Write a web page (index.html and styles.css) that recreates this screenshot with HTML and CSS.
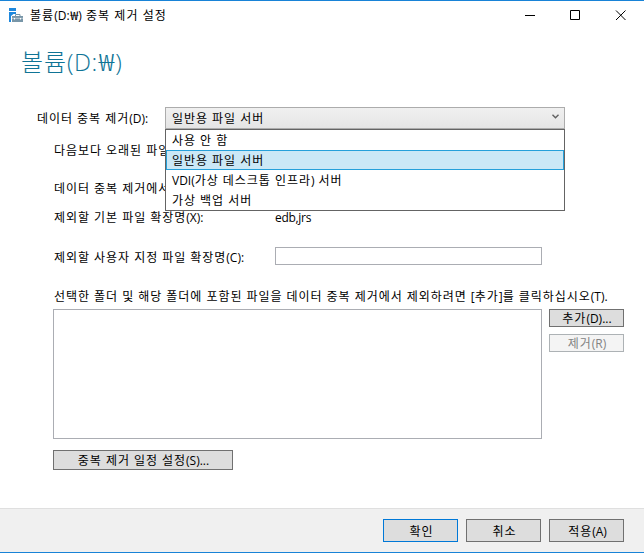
FILE: index.html
```html
<!DOCTYPE html>
<html lang="ko">
<head>
<meta charset="utf-8">
<title>볼륨(D:₩) 중복 제거 설정</title>
<link rel="stylesheet" href="styles.css">
</head>
<body>
<div class="window">
  <header class="titlebar">
    <svg class="app-icon" width="16" height="16" viewBox="0 0 16 16">
      <path fill="#1e88dd" d="M0 1h7v3H0zM0 5h7v2H4.500L2 9v6H0z"/>
      <path fill="#7896a8" d="M3 9h11v6H3z"/>
      <path fill="none" stroke="#7896a8" d="M6.500 9.500v-2h4.500v2"/>
      <path stroke="#d5dfe5" stroke-width=".7" d="M3 11.300h11"/>
      <path fill="#fff" d="M5 11h1v1.500H5zM11 11h1v1.500h-1z"/>
    </svg>
    <span class="caption">볼륨<span class="lat">(D:<span class="won">₩</span>)</span> 중복 제거 설정</span>
    <svg class="controls" width="102" height="12" viewBox="0 0 102 12" fill="none" stroke="#000">
      <path d="M0 5.500h10M45.500.500h9v9h-9z"/>
      <path d="M91 .5l9.500 9.500M100.500.5L91 10"/>
    </svg>
  </header>

  <h1>볼륨<span class="lat">(D:<span class="won">₩</span>)</span></h1>

  <main class="form">
    <div class="row mode">
      <label>데이터 중복 제거<span class="lat">(D):</span></label>
      <div class="combo">
        <span class="value">일반용 파일 서버</span>
        <svg width="7" height="5" viewBox="0 0 7 5" fill="none" stroke="#606060" stroke-width="1.400"><path d="M.5.700l3 3 3-3"/></svg>
        <ul class="menu">
          <li>사용 안 함</li>
          <li class="selected">일반용 파일 서버</li>
          <li><span class="lat">VDI(</span>가상 데스크톱 인프라<span class="lat">)</span> 서버</li>
          <li>가상 백업 서버</li>
        </ul>
      </div>
    </div>
    <div class="row age">다음보다 오래된 파일</div>
    <div class="row exclude">데이터 중복 제거에서</div>
    <div class="row defaults"><span class="name">제외할 기본 파일 확장명<span class="lat">(X):</span></span><span class="lat ext">edb,jrs</span></div>
    <div class="row custom"><span class="name">제외할 사용자 지정 파일 확장명<span class="lat">(C):</span></span><input class="field" type="text"></div>
    <p class="hint">선택한 폴더 및 해당 폴더에 포함된 파일을 데이터 중복 제거에서 제외하려면 <span class="lat">[</span>추가<span class="lat">]</span>를 클릭하십시오<span class="lat">(T).</span></p>
    <div class="folders">
      <div class="list"></div>
      <div class="side">
        <button>추가<span class="lat">(D)...</span></button>
        <button class="off">제거<span class="lat">(R)</span></button>
      </div>
    </div>
    <button class="schedule">중복 제거 일정 설정<span class="lat">(S)...</span></button>
  </main>

  <footer class="footer">
    <button class="primary">확인</button>
    <button>취소</button>
    <button>적용<span class="lat">(A)</span></button>
  </footer>
</div>
</body>
</html>
```
FILE: styles.css
```css
* { box-sizing: border-box; }
body {
  margin: 0;
  font: 12px/16px "Open Sans", "Noto Sans CJK KR", sans-serif;
  letter-spacing: .96px;
  color: #000;
  white-space: nowrap;
}
.lat { letter-spacing: 0; }
.won { display: inline-block; padding: 0 1px; transform: scaleX(1.2); }
.window {
  width: 644px;
  height: 553px;
  display: flex;
  flex-direction: column;
  background: #fff;
  border-top: 1px solid #1883d7;
  border-bottom: 1px solid #1883d7;
}
.titlebar {
  height: 29px;
  display: flex;
  align-items: center;
  padding: 0 17px 0 9px;
}
.app-icon { margin-top: -2px; }
.caption { flex: 1; margin-left: 5px; letter-spacing: 1.05px; }
.controls { margin-top: 1px; }
h1 {
  margin: 16px 0 0 21px;
  height: 32px;
  font-size: 24px;
  line-height: 32px;
  font-weight: 300;
  color: #0f7496;
}
h1 .lat { letter-spacing: .5px; }
h1 .won { padding: 0 2px; }
.form {
  flex: 1;
  padding: 29px 0 0 53px;
}
.row { display: flex; align-items: center; height: 16px; }
.mode { height: 22px; margin-left: -16px; }
.mode label { width: 128px; padding-top: 2px; }
.combo {
  position: relative;
  width: 400px;
  height: 22px;
  display: flex;
  align-items: center;
  justify-content: space-between;
  padding: 0 5px 0 6px;
  border: 1px solid #acacac;
  background: linear-gradient(#f0f0f0, #e5e5e5);
}
.value { padding-top: 2px; }
.combo svg { margin-top: -3px; }
.menu {
  position: absolute;
  top: 21px;
  left: -1px;
  width: 400px;
  height: 82px;
  margin: 0;
  padding: 0;
  list-style: none;
  border: 1px solid #646464;
  background: #fff;
}
.menu li {
  height: 20px;
  line-height: 16px;
  padding: 2px 5px 0;
  border: 1px solid transparent;
}
.menu .selected { background: #cbe8f6; border-color: #26a0da; }
.age { margin-top: 14px; padding-left: 1px; }
.exclude { margin-top: 22px; padding-left: 1px; }
.defaults { margin-top: 13px; padding-left: 1px; }
.name { width: 221px; }
.ext { letter-spacing: -.3px; }
.custom { margin-top: 21px; height: 18px; padding-left: 1px; }
.custom .name { padding-top: 4px; }
.field {
  width: 267px;
  height: 18px;
  padding: 0 2px;
  border: 1px solid #abadb3;
  background: #fff;
}
.hint { margin: 24px 0 0 1px; }
.folders { display: flex; gap: 7px; margin-top: 4px; }
.list { width: 489px; height: 130px; border: 1px solid #abadb3; }
.side { display: flex; flex-direction: column; gap: 7px; }
button {
  display: block;
  width: 75px;
  height: 18px;
  padding: 1px 0 0 1px;
  border: 1px solid #707070;
  background: #ddd;
  color: #000;
  font: inherit;
  letter-spacing: inherit;
}
.off { background: #f4f4f4; border-color: #adb2b5; color: #838383; }
.schedule { width: 180px; height: 20px; margin-top: 11px; padding-top: 2px; }
.footer {
  display: flex;
  justify-content: flex-end;
  gap: 8px;
  height: 44px;
  padding: 10px 20px 0 0;
  border-top: 1px solid #dfdfdf;
  background: #f0f0f0;
}
.footer button { height: 23px; padding: 2px 0 0 2px; }
.footer .primary { border-color: #0078d7; }
```
